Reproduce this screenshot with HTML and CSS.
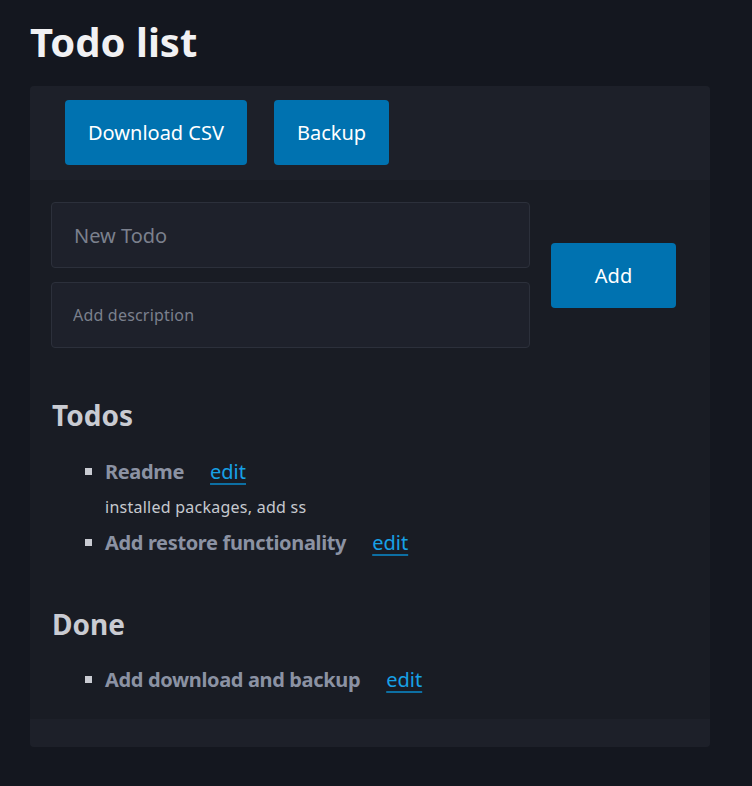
FILE: index.html
```html
<!DOCTYPE html>
<html lang="en">
<head>
<meta charset="utf-8">
<title>Todo list</title>
<link rel="stylesheet" href="styles.css">
</head>
<body>
<h1 class="title">Todo list</h1>
<div class="card">
  <div class="card-header">
    <button class="btn">Download CSV</button>
    <button class="btn">Backup</button>
  </div>
  <div class="card-body">
    <div class="form-row">
      <div class="fields">
        <input class="field field-title" type="text" placeholder="New Todo">
        <input class="field field-desc" type="text" placeholder="Add description">
      </div>
      <button class="btn btn-add">Add</button>
    </div>
    <h2 class="section">Todos</h2>
    <ul class="items">
      <li class="item">
        <div class="item-line"><span class="item-title">Readme</span><a class="edit" href="#">edit</a></div>
        <div class="item-desc">installed packages, add ss</div>
      </li>
      <li class="item">
        <div class="item-line"><span class="item-title">Add restore functionality</span><a class="edit" href="#">edit</a></div>
      </li>
    </ul>
    <h2 class="section section-done">Done</h2>
    <ul class="items">
      <li class="item">
        <div class="item-line"><span class="item-title">Add download and backup</span><a class="edit" href="#">edit</a></div>
      </li>
    </ul>
  </div>
  <div class="card-footer"></div>
</div>
</body>
</html>
```
FILE: styles.css
```css
html, body {
  margin: 0;
  padding: 0;
  background: #14171f;
}
body {
  font-family: "Noto Sans", "Open Sans", sans-serif;
  padding: 14px 42px 38px 30px;
}
.title {
  margin: 0;
  font-size: 40px;
  line-height: 56px;
  font-weight: 700;
  color: #f1f1f3;
}
.card {
  margin-top: 16px;
  background: #191c24;
  border-radius: 4px;
  overflow: hidden;
}
.card-header {
  background: #1d2029;
  padding: 14px 35px 15px;
  display: flex;
  gap: 27px;
}
.btn {
  font-family: inherit;
  background: #0072b0;
  color: #ffffff;
  border: 0;
  border-radius: 4px;
  font-size: 20px;
  height: 65px;
  padding: 0 23px;
  cursor: pointer;
}
.card-body {
  padding: 22px 34px 21px 21px;
}
.form-row {
  display: flex;
  align-items: center;
  gap: 21px;
}
.fields {
  display: flex;
  flex-direction: column;
  gap: 14px;
  width: 479px;
}
.field {
  box-sizing: border-box;
  height: 66px;
  width: 100%;
  background: #1e212b;
  border: 1px solid #2c303b;
  border-radius: 4px;
  color: #d0d3da;
  font-family: inherit;
  outline: none;
}
.field::placeholder {
  color: #7b808d;
}
.field-title {
  font-size: 20px;
  padding: 0 22px;
}
.field-desc {
  font-size: 16px;
  padding: 0 21px;
  letter-spacing: 0.2px;
}
.btn-add {
  width: 125px;
  padding: 0;
}
.section {
  margin: 50px 0 0 1px;
  font-size: 28px;
  line-height: 34px;
  font-weight: 700;
  color: #c9cbd2;
}
.section-done {
  margin-top: 46px;
}
.items {
  list-style: none;
  margin: 22px 0 0;
  padding: 0 0 0 34px;
}
.section-done + .items {
  margin-top: 21px;
}
.item {
  position: relative;
  padding-left: 20px;
}
.item::before {
  content: "";
  position: absolute;
  left: 0;
  top: 14px;
  width: 7px;
  height: 7px;
  background: #c9cbd2;
}
.item-line {
  display: flex;
  align-items: baseline;
  gap: 26px;
  line-height: 36px;
}
.item-title {
  font-size: 20px;
  font-weight: 700;
  letter-spacing: -0.35px;
  color: #8b92a3;
}
.edit {
  font-size: 20px;
  color: #17a1e6;
  text-decoration: underline;
  text-underline-offset: 4px;
  text-decoration-thickness: 2px;
  text-decoration-color: #0d6fa3;
}
.item-desc {
  font-size: 16px;
  line-height: 35px;
  letter-spacing: 0.25px;
  color: #c6c9cf;
}
.card-footer {
  height: 28px;
  background: #1d2029;
}
```
